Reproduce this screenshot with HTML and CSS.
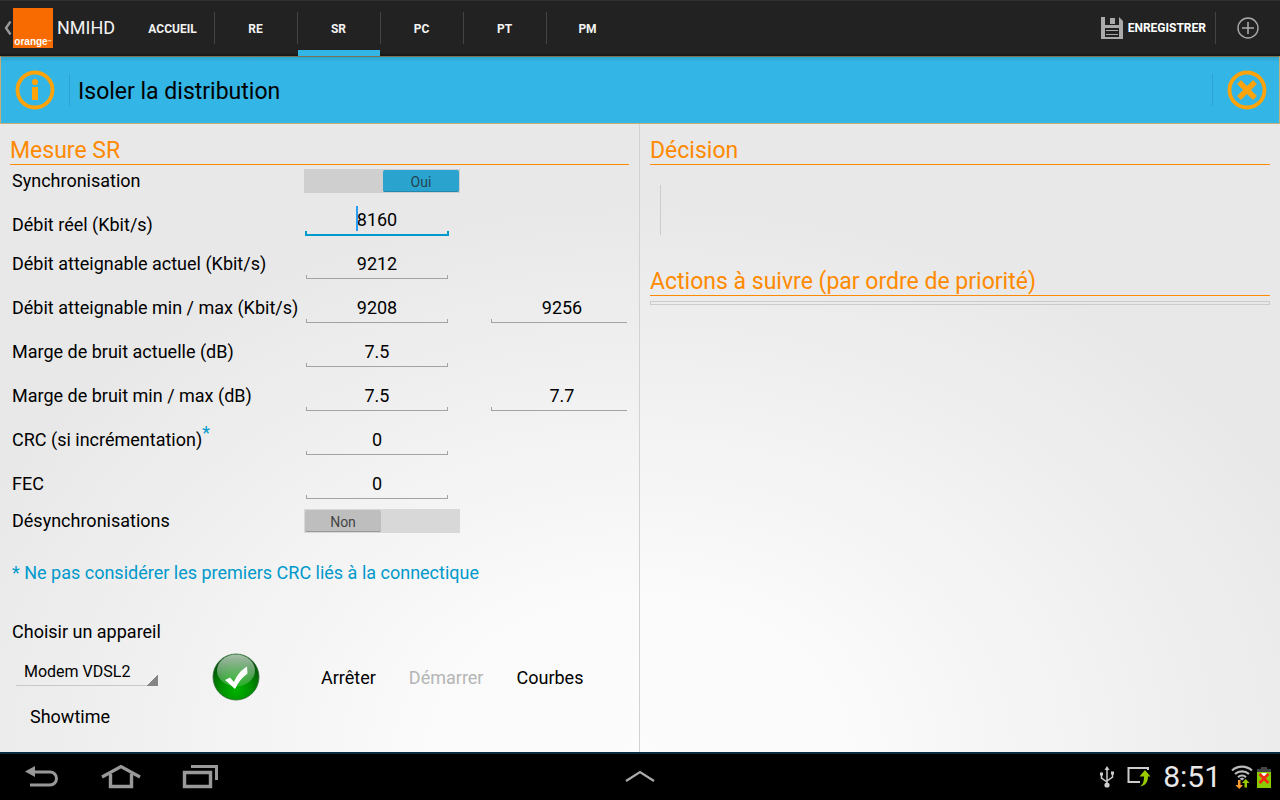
FILE: index.html
```html
<!DOCTYPE html>
<html lang="fr">
<head>
<meta charset="utf-8">
<meta name="viewport" content="width=device-width, initial-scale=1">
<title>NMIHD – Isoler la distribution</title>
<link rel="stylesheet" href="styles.css">
</head>
<body>
<header class="topbar">
  <a class="brand" href="#accueil" aria-label="NMIHD, retour">
    <svg class="brand-back" viewBox="0 0 8 14" aria-hidden="true"><path d="M6.500 0.500 2 7l4.500 6.500" fill="none" stroke="#999" stroke-width="2.400"/></svg>
    <span class="logo"><span class="logo-text">orange</span><span class="logo-tm">™</span></span>
    <span class="brand-name">NMIHD</span>
  </a>
  <nav class="tabs">
    <a class="tab" href="#accueil">ACCUEIL</a>
    <a class="tab" href="#re">RE</a>
    <a class="tab tab-active" href="#sr" aria-current="page">SR</a>
    <a class="tab" href="#pc">PC</a>
    <a class="tab" href="#pt">PT</a>
    <a class="tab" href="#pm">PM</a>
  </nav>
  <div class="actions">
    <button class="save" type="button">
      <svg class="save-icon" viewBox="0 0 22 22" aria-hidden="true">
        <path fill="#aaa" fill-rule="evenodd" d="M0 0h4v8h14V0l4 4v18H0zM4 11v9h14v-9z"/>
        <path fill="#aaa" d="M9 1h5v6H9zM5 13h12v1H5zM5 17h12v1H5z"/>
      </svg>
      <span>ENREGISTRER</span>
    </button>
    <button class="add" type="button" aria-label="Ajouter">
      <svg class="add-icon" viewBox="0 0 22 22" aria-hidden="true"><circle cx="11" cy="11" r="10" fill="none" stroke="#aaa" stroke-width="1.4"/><path d="M11 5v12M5 11h12" stroke="#aaa" stroke-width="1.6"/></svg>
    </button>
  </div>
</header>

<div class="banner">
  <button class="round" type="button" aria-label="Informations">
    <svg class="round-icon" viewBox="0 0 40 40" aria-hidden="true"><circle cx="20" cy="20" r="17.5" fill="none" stroke="#ffa30a" stroke-width="3.8"/><circle cx="20" cy="12" r="3.1" fill="#ffa30a"/><path fill="#ffa30a" d="M17 17h6v13h-6z"/></svg>
  </button>
  <h1 class="banner-title">Isoler la distribution</h1>
  <div class="banner-end">
    <button class="round" type="button" aria-label="Fermer">
      <svg class="round-icon" viewBox="0 0 40 40" aria-hidden="true"><circle cx="20" cy="20" r="17.5" fill="none" stroke="#ffa30a" stroke-width="3.8"/><path d="m12 12 16 16m0-16-16 16" stroke="#ffa30a" stroke-width="5.5"/></svg>
    </button>
  </div>
</div>

<main class="panels">
  <section class="panel panel-left">
    <h2 class="heading">Mesure SR</h2>
    <form class="form">
      <div class="row">
        <label for="sync">Synchronisation</label>
        <button class="switch switch-on" id="sync" type="button" role="switch" aria-checked="true"><span class="thumb">Oui</span></button>
      </div>
      <div class="fields">
        <div class="row row-focus">
          <label for="reel">Débit réel (Kbit/s)</label>
          <span class="cell"><input class="field field-focus" id="reel" type="text" value="8160"><span class="caret"></span></span>
        </div>
        <div class="row">
          <label for="actuel">Débit atteignable actuel (Kbit/s)</label>
          <span class="cell"><input class="field" id="actuel" type="text" value="9212"></span>
        </div>
        <div class="row">
          <label for="dmin">Débit atteignable min / max (Kbit/s)</label>
          <span class="cell"><input class="field" id="dmin" type="text" value="9208"></span>
          <span class="cell"><input class="field" type="text" value="9256" aria-label="Débit atteignable max"></span>
        </div>
        <div class="row">
          <label for="bruit">Marge de bruit actuelle (dB)</label>
          <span class="cell"><input class="field" id="bruit" type="text" value="7.5"></span>
        </div>
        <div class="row">
          <label for="bmin">Marge de bruit min / max (dB)</label>
          <span class="cell"><input class="field" id="bmin" type="text" value="7.5"></span>
          <span class="cell"><input class="field" type="text" value="7.7" aria-label="Marge de bruit max"></span>
        </div>
        <div class="row">
          <label for="crc">CRC (si incrémentation)<sup class="star">*</sup></label>
          <span class="cell"><input class="field" id="crc" type="text" value="0"></span>
        </div>
        <div class="row">
          <label for="fec">FEC</label>
          <span class="cell"><input class="field" id="fec" type="text" value="0"></span>
        </div>
      </div>
      <div class="row">
        <label for="desync">Désynchronisations</label>
        <button class="switch" id="desync" type="button" role="switch" aria-checked="false"><span class="thumb">Non</span></button>
      </div>
      <p class="note">* Ne pas considérer les premiers CRC liés à la connectique</p>
      <label class="device-label" for="device">Choisir un appareil</label>
      <div class="device">
        <select class="select" id="device"><option>Modem VDSL2</option></select>
        <button class="check" type="button" aria-label="Valider">
          <svg class="check-icon" viewBox="0 0 48 48" aria-hidden="true">
            <defs>
              <radialGradient id="ball" cx="50%" cy="78%" r="68%"><stop offset="0" stop-color="#00b400"/><stop offset=".5" stop-color="#008f00"/><stop offset="1" stop-color="#00500a"/></radialGradient>
              <linearGradient id="shine" x1="0" y1="0" x2="0" y2="1"><stop offset="0" stop-color="#fff" stop-opacity=".65"/><stop offset="1" stop-color="#fff" stop-opacity=".15"/></linearGradient>
            </defs>
            <circle cx="24" cy="24" r="23" fill="url(#ball)" stroke="#2f6b2f" stroke-width=".8"/>
            <ellipse cx="24" cy="17.5" rx="19" ry="16" fill="url(#shine)"/>
            <path fill="#fff" d="M13 27l5-2.500 4 4.500c3-7 7-12 13-15.500l.500 7c-5.500 4-9.500 9-12.500 15.500z"/>
          </svg>
        </button>
        <div class="commands">
          <button class="command" type="button">Arrêter</button>
          <button class="command" type="button" disabled>Démarrer</button>
          <button class="command" type="button">Courbes</button>
        </div>
      </div>
      <output class="status" for="device">Showtime</output>
    </form>
  </section>

  <section class="panel">
    <h2 class="heading">Décision</h2>
    <div class="decision"></div>
    <h2 class="heading">Actions à suivre (par ordre de priorité)</h2>
    <div class="action-list"></div>
  </section>
</main>

<footer class="system">
  <div class="system-nav">
    <button class="sys" type="button" aria-label="Retour"><svg width="40" height="28" viewBox="0 0 40 28" aria-hidden="true"><path fill="#999" d="M4 8.500 14 3v11z"/><path d="M12 9h17a6.500 6.500 0 0 1 0 13H9" fill="none" stroke="#999" stroke-width="3"/></svg></button>
    <button class="sys" type="button" aria-label="Accueil"><svg width="40" height="28" viewBox="0 0 40 28" aria-hidden="true"><path d="M1 14 20 3.500 39 14" fill="none" stroke="#999" stroke-width="3.200"/><path d="M9.500 11v12.500h21V11" fill="none" stroke="#999" stroke-width="3.400"/></svg></button>
    <button class="sys" type="button" aria-label="Applications récentes"><svg width="40" height="28" viewBox="0 0 40 28" aria-hidden="true"><path d="M3.500 9.500h26v14h-26z" fill="none" stroke="#999" stroke-width="3.400"/><path d="M10 3.500h25.500V17" fill="none" stroke="#999" stroke-width="3"/></svg></button>
  </div>
  <button class="sys" type="button" aria-label="Ouvrir le tiroir"><svg width="30" height="14" viewBox="0 0 30 14" aria-hidden="true"><path d="M1 11 15 2l14 9" fill="none" stroke="#aaa" stroke-width="2.200"/></svg></button>
  <div class="system-status">
    <svg width="16" height="22" viewBox="0 0 16 22" aria-hidden="true"><path d="M8 2v17M2.500 8v4L8 16M13.500 7v4L8 15" fill="none" stroke="#ccc" stroke-width="1.500"/><path fill="#ccc" d="M8 0l2.500 4h-5zM1 6.500h3v3H1zM12 5.500h3v3h-3z"/><circle cx="8" cy="19" r="2.600" fill="#ccc"/></svg>
    <svg width="24" height="22" viewBox="0 0 24 22" aria-hidden="true"><path d="M21 4V2H1.500v14H13" fill="none" stroke="#ccc" stroke-width="2"/><path fill="#9c0" d="m18 4 5.500 6.500H21c0 5-2 9-8 10 3-2 4-5 4-10h-4.500z"/></svg>
    <time class="clock">8:51</time>
    <svg width="22" height="24" viewBox="0 0 22 24" aria-hidden="true"><path d="M1 5.500a15 15 0 0 1 20 0M4 9a10.500 10.500 0 0 1 14 0M7 12.200a6 6 0 0 1 8 0" fill="none" stroke="#bbb" stroke-width="2.200"/><path fill="#bbb" d="M8.500 13.800 11 12.500l2.500 1.300L11 15.500z"/><path fill="#ff9b2e" d="M7 15h2.500v5H12l-3.700 4L4.500 20H7z"/><path fill="#9c0" d="M13.500 22.500H16v-4.500h2.500l-3.700-4-3.800 4h2.500z"/></svg>
    <svg width="14" height="21" viewBox="0 0 14 21" aria-hidden="true"><path fill="#444" d="M4 0h6v2h4v4H0V2h4z"/><path fill="#8c0" d="M0 5h14v16H0z"/><path fill="#fff" d="M4 6h6l-3 4z"/><path d="m2.500 7 9 9m0-9-9 9" stroke="#f42a13" stroke-width="2.800"/></svg>
  </div>
</footer>
</body>
</html>
```
FILE: styles.css
```css
* { box-sizing: border-box; }

body {
  margin: 0;
  min-height: 100vh;
  display: flex;
  flex-direction: column;
  font-family: Roboto, "Liberation Sans", sans-serif;
  font-size: 18px;
  line-height: 22px;
  color: #000;
  background: #e8e8e8;
}

button, input, select {
  font: inherit;
  color: inherit;
  margin: 0;
  padding: 0;
  border: 0;
  background: none;
  border-radius: 0;
}

h1, h2, p { margin: 0; font-weight: 400; }
a { color: inherit; text-decoration: none; }
svg { display: block; }

/* Top bar */
.topbar {
  display: flex;
  height: 56px;
  color: #fff;
  background: #222;
  border-top: 1px solid #303030;
  border-bottom: 2px solid #191919;
}
.brand { display: flex; align-items: center; width: 132px; padding-left: 4px; }
.brand-back { width: 8px; height: 14px; margin-right: 1px; }
.logo {
  display: flex;
  align-items: flex-end;
  justify-content: center;
  width: 40px;
  height: 40px;
  margin-right: 4px;
  background: #f76b00;
  font: 700 10px/13px "Liberation Sans", sans-serif;
}
.logo-tm { font-size: 4px; }
.brand-name { color: #f3f3f3; }
.tabs { display: flex; font-size: 12px; font-weight: 700; color: #f3f3f3; }
.tab {
  display: flex;
  align-items: center;
  justify-content: center;
  width: 83px;
  height: 55px;
  padding-right: 2px;
  background: linear-gradient(#444, #444) right 11px / 1px 32px no-repeat;
}
.tab:last-child { background: none; }
.tab-active {
  background:
    linear-gradient(#444, #444) right 11px / 1px 32px no-repeat,
    linear-gradient(#33b5e5, #33b5e5) left bottom / 82px 6px no-repeat;
}
.actions { display: flex; align-items: center; margin-left: auto; }
.save {
  display: flex;
  align-items: center;
  gap: 5px;
  height: 32px;
  padding-right: 9px;
  font-size: 12px;
  font-weight: 700;
  border-right: 1px solid #444;
}
.save-icon, .add-icon { width: 22px; height: 22px; }
.add { display: grid; place-items: center; width: 64px; height: 32px; }

/* Banner */
.banner {
  display: flex;
  align-items: center;
  height: 68px;
  padding: 0 12px 0 14px;
  background: linear-gradient(#2ea4d0, #33b5e5 5px);
  border: 1px solid #c9ad76;
  border-top-color: #7b7350;
}
.round-icon { width: 40px; height: 40px; }
.banner-title {
  margin-left: 14px;
  padding: 4px 0 0 8px;
  font-size: 23px;
  line-height: 28px;
  border-left: 1px solid #2ca2ce;
}
.banner-end {
  display: flex;
  align-items: center;
  height: 32px;
  margin-left: auto;
  padding-left: 14px;
  border-left: 1px solid #2ca2ce;
}

/* Panels */
.panels {
  flex: 1;
  display: grid;
  grid-template-columns: 1fr 1fr;
  background: radial-gradient(ellipse 58% 88% at 50% 100%, #fcfcfc 0%, #fafafa 30%, #f1f1f1 65%, #e8e8e8 100%);
}
.panel { padding: 14px 10px 0; }
.panel-left { border-right: 1px solid #d2d2d2; }
.heading {
  font-size: 23px;
  line-height: 26px;
  color: #ff8a00;
  border-bottom: 1px solid #ff8a00;
}
.form { padding: 4px 2px 0; }
.row {
  display: grid;
  grid-template-columns: 293px 144px minmax(0, 1fr);
  align-items: center;
}
.row-focus { align-items: end; }
.fields { display: grid; gap: 12px; padding: 11px 0 9px; }
.cell { position: relative; display: block; overflow: hidden; height: 32px; }
.cell + .cell { margin-left: 41px; }
.field {
  display: block;
  width: 144px;
  height: 32px;
  padding: 0 1px 2px;
  text-align: center;
  background:
    linear-gradient(#a3a3a3, #a3a3a3) 1px 30px / 142px 1px no-repeat,
    linear-gradient(#a3a3a3, #a3a3a3) 1px 27px / 1px 4px no-repeat,
    linear-gradient(#a3a3a3, #a3a3a3) 142px 27px / 1px 4px no-repeat;
}
.field-focus {
  background:
    linear-gradient(#0099cc, #0099cc) 0 30px / 144px 2px no-repeat,
    linear-gradient(#0099cc, #0099cc) 0 27px / 2px 5px no-repeat,
    linear-gradient(#0099cc, #0099cc) 142px 27px / 2px 5px no-repeat;
}
.caret {
  position: absolute;
  top: 2px;
  left: calc(50% - 21px);
  width: 2px;
  height: 25px;
  background: #2a9df4;
}
.star { color: #0099cc; font-size: 18px; line-height: 0; }
.switch {
  display: flex;
  width: 156px;
  height: 24px;
  margin-left: -1px;
  padding: 1px;
  background: #d8d8d8;
}
.thumb {
  width: 76px;
  height: 22px;
  font-size: 14px;
  line-height: 24px;
  color: #444;
  background: #bebebe;
  border-bottom: 1px solid #999;
  border-radius: 2px;
}
.switch-on { justify-content: flex-end; background: #cfcfcf; }
.switch-on .thumb { color: #24434f; background: #2ba3cf; border-bottom-color: #2488ac; }

.note { margin-top: 29px; color: #0099cc; }
.device-label { display: block; margin-top: 37px; }
.device { display: flex; align-items: center; margin: 10px 0 0 4px; }
.select {
  appearance: none;
  width: 142px;
  height: 30px;
  margin-bottom: 12px;
  padding: 2px 8px 0;
  font-size: 16px;
  background:
    linear-gradient(135deg, transparent 50%, #858585 50%) right bottom / 12px 12px no-repeat,
    linear-gradient(#c8c8c8, #c8c8c8) left bottom / 100% 1px no-repeat;
}
.check { margin-left: 54px; }
.check-icon { width: 48px; height: 48px; }
.commands { display: flex; gap: 33px; margin-left: 61px; padding-top: 2px; }
.command:disabled { color: #b5b5b5; }
.status { display: block; margin: 5px 0 24px 18px; }

.decision { height: 50px; margin: 20px 10px 34px; border-left: 1px solid #ccc; }
.action-list { height: 4px; margin-top: 5px; border: 1px solid #ccc; }

/* System bar */
.system {
  display: grid;
  grid-template-columns: 1fr auto 1fr;
  align-items: center;
  height: 48px;
  background: #000;
  border-top: 2px solid #082c3d;
}
.system-nav { display: flex; gap: 40px; padding-left: 21px; }
.system-status { display: flex; align-items: center; justify-content: flex-end; gap: 12px; padding-right: 9px; }
.clock { color: #e8e8e8; font-size: 30px; line-height: 40px; }
.clock + svg { margin-right: -8px; margin-left: -2px; }
```
